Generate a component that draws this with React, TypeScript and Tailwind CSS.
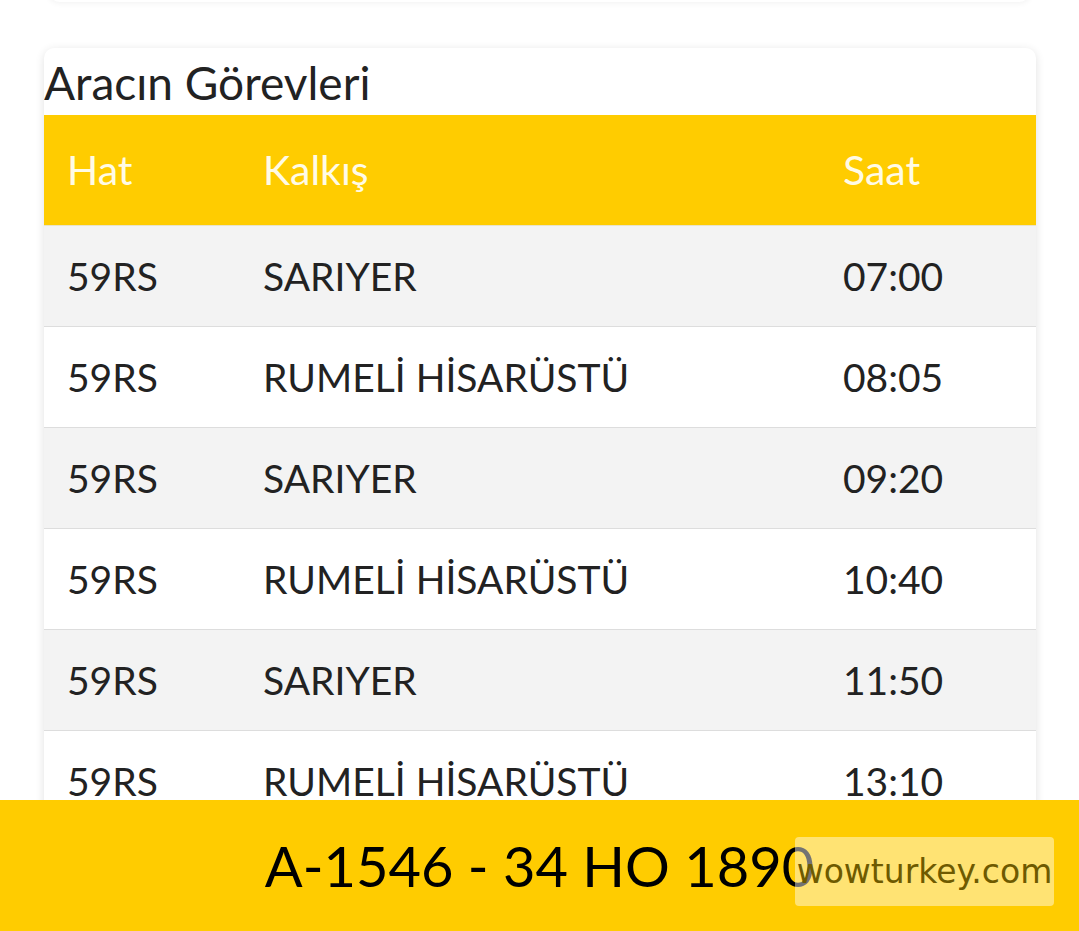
const rows = [
  { hat: "59RS", kalkis: "SARIYER", saat: "07:00" },
  { hat: "59RS", kalkis: "RUMELİ HİSARÜSTÜ", saat: "08:05" },
  { hat: "59RS", kalkis: "SARIYER", saat: "09:20" },
  { hat: "59RS", kalkis: "RUMELİ HİSARÜSTÜ", saat: "10:40" },
  { hat: "59RS", kalkis: "SARIYER", saat: "11:50" },
  { hat: "59RS", kalkis: "RUMELİ HİSARÜSTÜ", saat: "13:10" },
  { hat: "59RS", kalkis: "SARIYER", saat: "14:30" },
];

export default function App() {
  return (
    <div className="relative flex h-[931px] w-[1079px] flex-col overflow-hidden bg-white font-['Lato','Noto_Sans',sans-serif]">
      <div className="flex-1 overflow-hidden">
        {/* bottom edge of the card above */}
        <div className="mx-[48px] -mt-[20px] h-[22px] rounded-b-xl bg-white shadow-[0_1px_6px_rgba(0,0,0,0.06)]" />

        <div className="mx-[44px] mt-[46px] w-[992px] overflow-hidden rounded-t-[10px] bg-white shadow-[0_2px_10px_rgba(0,0,0,0.12)]">
          <h2 className="h-[67px] pt-[9px] text-[46px] leading-[52px] text-[#222]">Aracın Görevleri</h2>
          <div className="flex h-[111px] items-center border-b border-[#e9e3c8] bg-[#ffcc00] text-[41px] text-[#fffbe6]">
            <div className="w-[219px] pl-[23px]">Hat</div>
            <div className="w-[580px]">Kalkış</div>
            <div>Saat</div>
          </div>
          {rows.map((r, i) => (
            <div
              key={i}
              className={`flex h-[101px] items-center border-b border-[#dddddd] text-[39px] text-[#222] ${
                i % 2 === 0 ? "bg-[#f3f3f3]" : "bg-white"
              }`}
            >
              <div className="w-[219px] pl-[23px]">{r.hat}</div>
              <div className="w-[580px]">{r.kalkis}</div>
              <div>{r.saat}</div>
            </div>
          ))}
        </div>
      </div>

      <div className="flex h-[131px] shrink-0 items-center justify-center bg-[#ffcc00] text-[56px] text-black">
        A-1546 - 34 HO 1890
      </div>

      <div className="absolute bottom-[25px] right-[25px] flex h-[69px] w-[259px] items-center justify-center rounded-[4px] bg-[rgba(255,255,255,0.45)] font-['DejaVu_Sans',sans-serif] text-[33px] text-[#6e5a00]">
        wowturkey.com
      </div>
    </div>
  );
}
